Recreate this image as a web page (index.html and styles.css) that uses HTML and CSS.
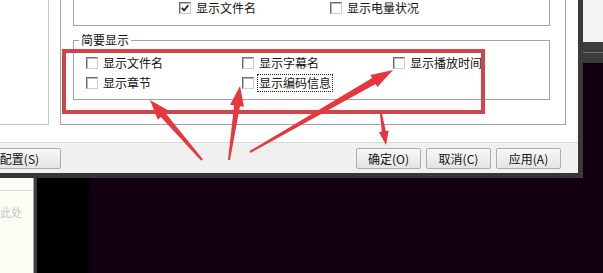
FILE: index.html
```html
<!DOCTYPE html>
<html lang="zh-CN">
<head>
<meta charset="utf-8">
<title>简要显示</title>
<link rel="stylesheet" href="styles.css">
</head>
<body>
<div class="screen">
  <div class="top">
    <div class="dialog">
      <div class="main">
        <div class="list-panel"></div>
        <div class="outer">
          <div class="group-top">
            <div class="top-row">
              <label class="cb col-top"><span class="box"><svg class="tick" viewBox="0 0 10 10" width="10" height="10"><path d="M1.8 4.8 L4 7.4 L8.4 2.2" fill="none" stroke="#1e1e1e" stroke-width="1.7"/></svg></span>显示文件名</label>
              <label class="cb"><span class="box"></span>显示电量状况</label>
            </div>
          </div>
          <fieldset class="brief">
            <legend>简要显示</legend>
            <div class="grid">
              <label class="cb"><span class="box"></span>显示文件名</label>
              <label class="cb"><span class="box"></span>显示字幕名</label>
              <label class="cb"><span class="box"></span>显示播放时间</label>
              <label class="cb"><span class="box"></span>显示章节</label>
              <label class="cb"><span class="box"></span><span class="focus">显示编码信息</span></label>
            </div>
          </fieldset>
        </div>
      </div>
      <div class="footer">
        <button class="btn btn-config">配置(S)</button>
        <div class="btn-group">
          <button class="btn">确定(O)</button>
          <button class="btn">取消(C)</button>
          <button class="btn">应用(A)</button>
        </div>
      </div>
    </div>
    <div class="side">
      <div class="side-light"></div>
      <div class="side-bar"></div>
    </div>
  </div>
  <div class="lower">
    <div class="cream">
      <div class="cream-head"></div>
      <div class="cream-text">此处</div>
    </div>
    <div class="divider"></div>
    <div class="black"></div>
  </div>
  <div class="annot-box"></div>
  <svg class="arrows" width="603" height="273" viewBox="0 0 603 273">
    <g fill="#e5373d">
      <polygon points="202.8,159.3 165.4,113.1 168.4,110.5 150,100 157.8,119.7 160.8,117.1 201.2,160.7"/>
      <polygon points="230,160.1 240,106.2 244,106.8 240,86 230.1,104.8 234.1,105.4 228,159.9"/>
      <polygon points="250.5,152.9 375.6,84 377.4,87.1 393,70 370.4,74.9 372.2,78 249.5,151.1"/>
      <polygon points="380,114.2 381.8,131.5 378.9,132 386,145 388.7,130.4 385.8,130.9 382,113.8"/>
    </g>
  </svg>
</div>
</body>
</html>
```

FILE: styles.css
```css
html, body {
  margin: 0;
  padding: 0;
  background: #120010;
}

.screen {
  position: relative;
  width: 603px;
  height: 273px;
  overflow: hidden;
  display: flex;
  flex-direction: column;
  font-family: "Noto Sans CJK SC", "Microsoft YaHei", sans-serif;
  font-size: 12px;
  color: #111;
  background: #120010;
}

.top {
  display: flex;
  height: 178px;
  flex: none;
}

.dialog {
  width: 578px;
  height: 173px;
  border-right: 5px solid #3a3a3a;
  border-bottom: 5px solid #363636;
  display: flex;
  flex-direction: column;
  flex: none;
}

.main {
  height: 142px;
  background: #ffffff;
  display: flex;
  align-items: flex-start;
  flex: none;
}

.list-panel {
  box-sizing: border-box;
  width: 49px;
  height: 125px;
  background: #ffffff;
  border-right: 1px solid #c6c6c6;
  border-bottom: 1px solid #c6c6c6;
  flex: none;
}

.outer {
  box-sizing: border-box;
  width: 506px;
  height: 125px;
  margin-left: 11px;
  border: 1px solid #a3a3a3;
  border-top: none;
  padding-left: 12px;
  flex: none;
}

.group-top {
  box-sizing: border-box;
  width: 477px;
  height: 26px;
  border: 1px solid #a3a3a3;
  border-top: none;
}

.top-row {
  display: flex;
  height: 16px;
  padding-left: 105px;
}

.col-top {
  width: 151px;
}

.cb {
  display: flex;
  align-items: center;
  gap: 5px;
  line-height: 16px;
  white-space: nowrap;
}

.box {
  box-sizing: border-box;
  width: 12px;
  height: 12px;
  flex: none;
  background: #ffffff;
  border: 1px solid;
  border-color: #6c6c6c #cdcdcd #cdcdcd #6c6c6c;
  box-shadow: inset 1px 1px 0 #b9b9b9;
  display: flex;
  align-items: center;
  justify-content: center;
}

.tick {
  display: block;
}

.brief {
  box-sizing: border-box;
  width: 477px;
  min-width: 0;
  margin: 6px 0 0 0;
  padding: 5px 5px 6px 5px;
  border: 1px solid #a3a3a3;
}

.brief legend {
  padding: 0 2px;
  font-size: 12px;
  line-height: 16px;
}

.grid {
  margin-left: 7px;
  display: grid;
  grid-template-columns: 156px 151px auto;
  grid-auto-rows: 20px;
  align-items: center;
}

.focus {
  outline: 1px dotted #222;
  outline-offset: 1px;
  line-height: 14px;
}

.footer {
  box-sizing: border-box;
  height: 31px;
  border-top: 1px solid #dadada;
  background: #f0f0f0;
  display: flex;
  justify-content: space-between;
  align-items: flex-start;
  padding: 5px 17px 0 0;
  flex: none;
}

.btn {
  box-sizing: border-box;
  width: 65px;
  height: 21px;
  padding: 0;
  border: 1px solid #acacac;
  border-radius: 2px;
  background: linear-gradient(#f7f7f7, #e4e4e4);
  font-family: "Noto Sans CJK SC", "Microsoft YaHei", sans-serif;
  font-size: 12px;
  line-height: 19px;
  color: #111;
}

.btn-config {
  width: 83px;
  margin-left: -22px;
}

.btn-group {
  display: flex;
  gap: 5px;
}

.side {
  width: 20px;
  display: flex;
  flex-direction: column;
  flex: none;
}

.side-light {
  height: 42px;
  background: #f3f3f3;
}

.side-bar {
  height: 21px;
  background: linear-gradient(to bottom, #3c3c3c 10px, #707070 10px, #707070 11px, #3c3c3c 11px);
}

.lower {
  display: flex;
  flex: 1;
}

.cream {
  width: 33px;
  background: #fdfdf5;
  flex: none;
}

.cream-head {
  height: 12px;
  border-bottom: 1px solid #d8d8d8;
}

.cream-text {
  margin-top: 13px;
  font-size: 11px;
  line-height: 16px;
  color: #c4c4c4;
  white-space: nowrap;
}

.divider {
  box-sizing: border-box;
  width: 4px;
  border-left: 1px solid #a8a8a8;
  background: #3c3c3c;
  flex: none;
}

.black {
  width: 52px;
  background: #000000;
  flex: none;
}

.annot-box {
  position: absolute;
  left: 62px;
  top: 49px;
  width: 423px;
  height: 65px;
  box-sizing: border-box;
  border: 4px solid #cf4549;
}

.arrows {
  position: absolute;
  left: 0;
  top: 0;
  pointer-events: none;
}
```
